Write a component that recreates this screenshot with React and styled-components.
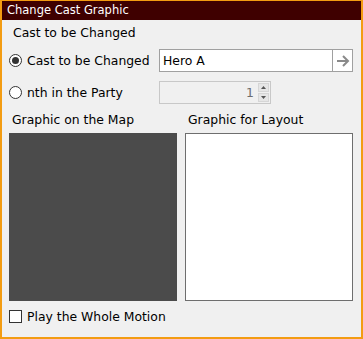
import styled, { createGlobalStyle } from "styled-components";

const Global = createGlobalStyle`
  html, body {
    margin: 0;
    padding: 0;
    background: #f0f0f0;
  }
  body {
    font-family: "DejaVu Sans", Verdana, sans-serif;
    font-size: 12.4px;
    color: #000;
  }
`

const Window = styled.div`
  width: 363px;
  height: 339px;
  box-sizing: border-box;
  border: 2px solid #f39c12;
  border-top-width: 1px;
  background: #f0f0f0;
  display: flex;
  flex-direction: column;
`

const TitleBar = styled.div`
  height: 19px;
  background: #3f0000;
  color: #fff;
  font-size: 11.5px;
  line-height: 19px;
  padding-left: 5px;
`

const Body = styled.div`
  flex: 1;
  padding: 5px 8px 0 7px;
  display: flex;
  flex-direction: column;
`

const SectionLabel = styled.div`
  line-height: 16px;
  padding-left: ${p => p.$indent || 0}px;
`

const Rows = styled.div`
  display: grid;
  grid-template-columns: 150px 1fr;
  row-gap: 9px;
  margin-top: 8px;
`

const RadioLabel = styled.label`
  display: flex;
  align-items: center;
  gap: 5px;
  height: 23px;
`

const RadioDot = styled.span`
  width: 11px;
  height: 11px;
  border-radius: 50%;
  border: 1px solid #333;
  background: #fff;
  display: flex;
  align-items: center;
  justify-content: center;
  &::after {
    content: "";
    display: ${p => (p.$checked ? "block" : "none")};
    width: 7px;
    height: 7px;
    border-radius: 50%;
    background: #333;
  }
`

const TextField = styled.div`
  height: 23px;
  box-sizing: border-box;
  border: 1px solid #a0a0a0;
  background: #fff;
  display: flex;
  align-items: stretch;
`

const FieldText = styled.div`
  flex: 1;
  line-height: 21px;
  padding-left: 3px;
`

const ArrowButton = styled.div`
  width: 19px;
  border-left: 1px solid #a0a0a0;
  display: flex;
  align-items: center;
  justify-content: center;
`

const Spinner = styled.div`
  width: 112px;
  height: 23px;
  box-sizing: border-box;
  border: 1px solid #c8c8c8;
  background: #f0f0f0;
  display: flex;
  align-items: stretch;
`

const SpinValue = styled.div`
  flex: 1;
  text-align: right;
  line-height: 21px;
  padding-right: 4px;
  color: #6d6d6d;
`

const SpinButtons = styled.div`
  width: 11px;
  margin: 1px 1px 1px 0;
  display: flex;
  flex-direction: column;
  gap: 1px;
`

const SpinButton = styled.div`
  flex: 1;
  background: #e6e6e6;
  border: 1px solid #d6d6d6;
  display: flex;
  align-items: center;
  justify-content: center;
`

const Graphics = styled.div`
  display: grid;
  grid-template-columns: 168px 168px;
  column-gap: 8px;
  margin-top: 8px;
`

const GraphicColumn = styled.div`
  display: flex;
  flex-direction: column;
  gap: 5px;
`

const GraphicTitle = styled.div`
  line-height: 16px;
  padding-left: 3px;
`

const GraphicBox = styled.div`
  height: 168px;
  box-sizing: border-box;
  background: ${p => (p.$dark ? "#4b4b4b" : "#fff")};
  border: ${p => (p.$dark ? "none" : "1px solid #6e6e6e")};
`

const CheckRow = styled.label`
  display: flex;
  align-items: center;
  gap: 5px;
  margin-top: 8px;
`

const CheckBox = styled.span`
  width: 11px;
  height: 11px;
  border: 1px solid #333;
  background: #fff;
`

const Arrow = () => (
  <svg width="14" height="12" viewBox="0 0 14 12">
    <path d="M1 6 H12 M7 1 L12 6 L7 11" fill="none" stroke="#8a8a8a" strokeWidth="2" />
  </svg>
)

const Tri = ({up}) => (
  <svg width="5" height="3" viewBox="0 0 5 3">
    <path d={up ? "M0 3 L2.5 0 L5 3 Z" : "M0 0 L2.5 3 L5 0 Z"} fill="#555" />
  </svg>
)

export default function App() {
  return <>
    <Global/>
    <Window>
      <TitleBar>Change Cast Graphic</TitleBar>
      <Body>
        <SectionLabel $indent={4}>Cast to be Changed</SectionLabel>
        <Rows>
          <RadioLabel><RadioDot $checked/>Cast to be Changed</RadioLabel>
          <TextField>
            <FieldText>Hero A</FieldText>
            <ArrowButton><Arrow/></ArrowButton>
          </TextField>
          <RadioLabel><RadioDot/>nth in the Party</RadioLabel>
          <Spinner>
            <SpinValue>1</SpinValue>
            <SpinButtons>
              <SpinButton><Tri up/></SpinButton>
              <SpinButton><Tri/></SpinButton>
            </SpinButtons>
          </Spinner>
        </Rows>
        <Graphics>
          <GraphicColumn>
            <GraphicTitle>Graphic on the Map</GraphicTitle>
            <GraphicBox $dark/>
          </GraphicColumn>
          <GraphicColumn>
            <GraphicTitle>Graphic for Layout</GraphicTitle>
            <GraphicBox/>
          </GraphicColumn>
        </Graphics>
        <CheckRow><CheckBox/>Play the Whole Motion</CheckRow>
      </Body>
    </Window>
  </>
}
